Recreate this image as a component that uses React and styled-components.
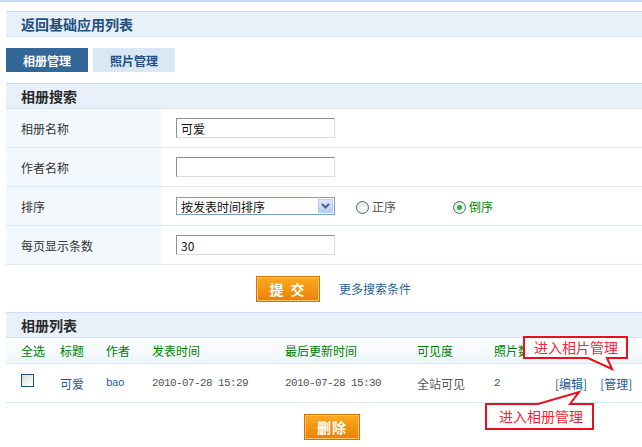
import React from "react";
import styled, { createGlobalStyle } from "styled-components";

const GlobalStyle = createGlobalStyle`
  html, body {
    margin: 0;
    padding: 0;
    background: #fff;
  }
  body {
    font-family: "Noto Sans CJK SC", "Noto Sans", sans-serif;
    font-size: 12px;
    color: #333;
  }
`;

const searchRows = [
  { label: "相册名称", type: "text", value: "可爱" },
  { label: "作者名称", type: "text", value: "" },
  { label: "排序", type: "sort" },
  { label: "每页显示条数", type: "text", value: "30" },
];

const columns = ["全选", "标题", "作者", "发表时间", "最后更新时间", "可见度", "照片数", "操作"];

const albums = [
  {
    title: "可爱",
    author: "bao",
    created: "2010-07-28 15:29",
    updated: "2010-07-28 15:30",
    visible: "全站可见",
    count: 2,
  },
];

export default function App() {
  return (
    <Page>
      <GlobalStyle />
      <TopLine />
      <Content>
        <Bar>
          <BackTitle>返回基础应用列表</BackTitle>
        </Bar>

        <Tabs>
          <Tab active>相册管理</Tab>
          <Tab>照片管理</Tab>
        </Tabs>

        <Bar>
          <SectionTitle>相册搜索</SectionTitle>
        </Bar>
        <Form>
          {searchRows.map((row) => (
            <FormRow key={row.label}>
              <Label>{row.label}</Label>
              <Field>
                {row.type === "sort" ? (
                  <>
                    <Select>
                      <span>按发表时间排序</span>
                      <SelectArrow>
                        <svg width="9" height="6" viewBox="0 0 9 6">
                          <path d="M1 1 L4.5 4.5 L8 1" fill="none" stroke="#4d6185" strokeWidth="2" />
                        </svg>
                      </SelectArrow>
                    </Select>
                    <Radio>
                      <RadioDot />
                      正序
                    </Radio>
                    <Radio checked>
                      <RadioDot checked />
                      倒序
                    </Radio>
                  </>
                ) : (
                  <TextBox defaultValue={row.value} />
                )}
              </Field>
            </FormRow>
          ))}
        </Form>
        <Actions>
          <OrangeButton wide>提 交</OrangeButton>
          <MoreLink href="#">更多搜索条件</MoreLink>
        </Actions>

        <Bar>
          <SectionTitle>相册列表</SectionTitle>
        </Bar>
        <HeadRow>
          {columns.map((c) => (
            <Cell key={c}>{c}</Cell>
          ))}
        </HeadRow>
        {albums.map((a) => (
          <DataRow key={a.title}>
            <Cell>
              <CheckBox />
            </Cell>
            <Cell>
              <BlueText>{a.title}</BlueText>
            </Cell>
            <Cell>
              <Mono blue>{a.author}</Mono>
            </Cell>
            <Cell>
              <Mono>{a.created}</Mono>
            </Cell>
            <Cell>
              <Mono>{a.updated}</Mono>
            </Cell>
            <Cell>{a.visible}</Cell>
            <Cell>
              <Mono>{a.count}</Mono>
            </Cell>
            <Cell>
              <OpLink href="#">[编辑]</OpLink>
              <OpLink href="#">[管理]</OpLink>
            </Cell>
          </DataRow>
        ))}
        <Actions bottom>
          <OrangeButton>删除</OrangeButton>
        </Actions>
      </Content>

      <Callout style={{ left: 522, top: 335 }}>
        <svg width="108" height="36" viewBox="0 0 108 36">
          <path
            d="M2 2 H105 V23 H85 L90 34 L66 23 H2 Z"
            fill="#fff"
            stroke="#e8101c"
            strokeWidth="2"
          />
        </svg>
        <CalloutText style={{ left: 12, top: 2 }}>进入相片管理</CalloutText>
      </Callout>
      <Callout style={{ left: 484, top: 390 }}>
        <svg width="112" height="42" viewBox="0 0 112 42">
          <path
            d="M2 14 H54 L95 2 L86 14 H109 V39 H2 Z"
            fill="#fff"
            stroke="#e8101c"
            strokeWidth="2"
          />
        </svg>
        <CalloutText style={{ left: 15, top: 16 }}>进入相册管理</CalloutText>
      </Callout>
    </Page>
  );
}

const Page = styled.div`
  position: relative;
  width: 642px;
  height: 447px;
  overflow: hidden;
`;

const TopLine = styled.div`
  height: 2px;
  background: #c4dcf6;
`;

const Content = styled.div`
  padding: 9px 0 0 6px;
`;

const Bar = styled.div`
  display: flex;
  align-items: center;
  height: 24px;
  padding-left: 15px;
  background: #e8f0f9;
  border-top: 1px solid #c9dbee;
  border-bottom: 1px solid #d9e6f3;
`;

const BackTitle = styled.div`
  font-size: 14px;
  font-weight: bold;
  color: #1f4f7f;
`;

const SectionTitle = styled.div`
  font-size: 14px;
  font-weight: bold;
  color: #2b2b2b;
`;

const Tabs = styled.div`
  display: flex;
  gap: 5px;
  margin: 11px 0;
`;

const Tab = styled.div`
  width: 82px;
  height: 24px;
  display: flex;
  align-items: center;
  justify-content: center;
  font-weight: bold;
  font-size: 12px;
  background: ${({ active }) => (active ? "#336699" : "#dae7f5")};
  color: ${({ active }) => (active ? "#fff" : "#1f4f7f")};
`;

const Form = styled.div``;

const FormRow = styled.div`
  display: flex;
  height: 38px;
  border-bottom: 1px solid #dde9f5;
`;

const Label = styled.div`
  width: 140px;
  padding-left: 15px;
  display: flex;
  align-items: center;
  background: #f3f8fd;
  color: #333;
`;

const Field = styled.div`
  flex: 1;
  display: flex;
  align-items: center;
  padding-left: 15px;
`;

const TextBox = styled.input`
  box-sizing: border-box;
  width: 159px;
  height: 20px;
  margin: 0;
  padding: 0 4px;
  font-family: "Noto Sans CJK SC", sans-serif;
  font-size: 12px;
  color: #111;
  border: 1px solid #a5acb2;
  border-top-color: #8f8f8f;
  border-left-color: #8f8f8f;
  border-right-color: #dcdcdc;
  border-bottom-color: #dcdcdc;
  outline: none;
`;

const Select = styled.div`
  box-sizing: border-box;
  width: 159px;
  height: 18px;
  border: 1px solid #7f9db9;
  display: flex;
  align-items: center;
  justify-content: space-between;
  padding-left: 4px;
  color: #111;
  background: #fff;
`;

const SelectArrow = styled.div`
  width: 15px;
  height: 14px;
  margin-right: 1px;
  display: flex;
  align-items: center;
  justify-content: center;
  background: linear-gradient(#dce8fd, #b6cdf8);
  border: 1px solid #b9cdf4;
  box-sizing: border-box;
`;

const Radio = styled.label`
  display: flex;
  align-items: center;
  gap: 3px;
  margin-left: ${({ checked }) => (checked ? "57px" : "21px")};
  color: ${({ checked }) => (checked ? "#078a07" : "#555")};
`;

const RadioDot = styled.span`
  position: relative;
  width: 11px;
  height: 11px;
  margin-top: 3px;
  border-radius: 50%;
  border: 1px solid #3c6a93;
  background: radial-gradient(circle at 60% 60%, #fff, #dcdcd4);
  &::after {
    content: "";
    display: ${({ checked }) => (checked ? "block" : "none")};
    position: absolute;
    left: 3px;
    top: 3px;
    width: 5px;
    height: 5px;
    border-radius: 50%;
    background: #2fae2f;
  }
`;

const Actions = styled.div`
  display: flex;
  box-sizing: border-box;
  height: ${({ bottom }) => (bottom ? "38px" : "47px")};
  padding-top: ${({ bottom }) => (bottom ? "11px" : "0")};
  align-items: ${({ bottom }) => (bottom ? "flex-start" : "center")};
  padding-left: ${({ bottom }) => (bottom ? "298px" : "250px")};
`;

const OrangeButton = styled.button`
  box-sizing: border-box;
  width: ${({ wide }) => (wide ? "64px" : "56px")};
  height: 26px;
  margin: 0;
  padding: 0;
  border: 1px solid #d27300;
  box-shadow: inset 0 0 0 1px #fbc46a;
  background: linear-gradient(#f9ac1f, #ec7f07);
  color: #fff;
  font-family: "Noto Sans CJK SC", sans-serif;
  font-size: 14px;
  font-weight: bold;
  letter-spacing: ${({ wide }) => (wide ? "2px" : "1px")};
`;

const MoreLink = styled.a`
  margin-left: 19px;
  color: #2b5f96;
  text-decoration: none;
`;

const listGrid = `
  display: grid;
  grid-template-columns: 39px 46px 46px 133px 132px 77px 61px 1fr;
  padding-left: 15px;
  align-items: center;
`;

const HeadRow = styled.div`
  ${listGrid}
  height: 25px;
  color: #008000;
  background: linear-gradient(#fcfeff, #eef6fb);
  border-bottom: 1px solid #dbe7f3;
`;

const DataRow = styled.div`
  ${listGrid}
  height: 38px;
  color: #555;
  border-bottom: 1px solid #d9e7f4;
`;

const Cell = styled.div`
  white-space: nowrap;
  display: flex;
  align-items: center;
`;

const CheckBox = styled.span`
  box-sizing: border-box;
  width: 13px;
  height: 13px;
  margin-top: -6px;
  border: 1px solid #1c5180;
  background: linear-gradient(135deg, #dcdcd6, #fff);
`;

const BlueText = styled.span`
  color: #1f5b96;
`;

const Mono = styled.span`
  font-family: "Liberation Mono", "DejaVu Sans Mono", monospace;
  font-size: 11px;
  letter-spacing: -0.6px;
  color: ${({ blue }) => (blue ? "#1f5b96" : "#555")};
`;

const OpLink = styled.a`
  color: #1f5b96;
  text-decoration: none;
  margin-right: 13px;
`;

const Callout = styled.div`
  position: absolute;
  svg {
    display: block;
  }
`;

const CalloutText = styled.span`
  position: absolute;
  font-size: 14px;
  line-height: 20px;
  color: #f0283a;
  white-space: nowrap;
`;
